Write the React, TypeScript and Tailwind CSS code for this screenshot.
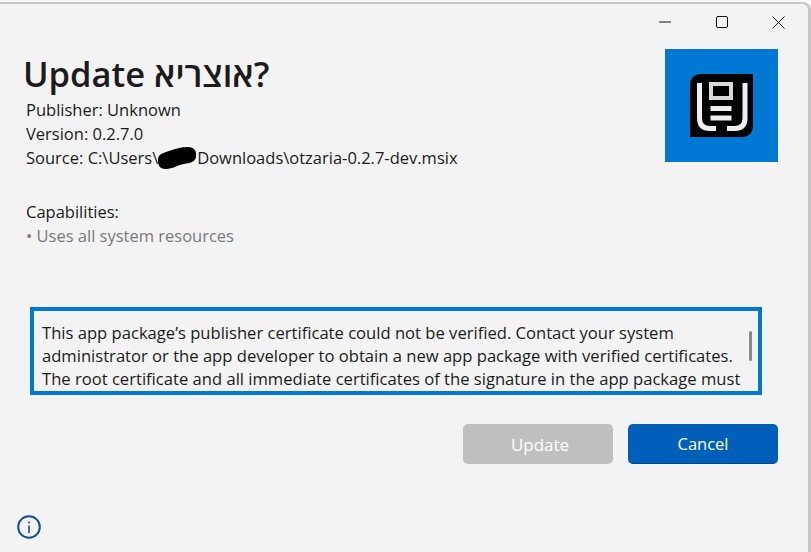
const font = { fontFamily: '"Open Sans", sans-serif' };

function CaptionButton({ children }: { children: React.ReactNode }) {
  return <div className="w-[57px] h-[36px] flex items-center justify-center">{children}</div>;
}

export default function App() {
  return (
    <div className="w-[811px] h-[552px] overflow-hidden bg-[#fafafa] text-[#1b1b1b]" style={font}>
      <div className="w-[811px] h-[550px] mt-[2px] bg-[#f3f3f3] border-t-2 border-r-[3px] border-[#c6c6c6] rounded-tr-lg flex flex-col relative">
        <div className="flex justify-end h-[40px] pr-[1px]">
          <CaptionButton>
            <svg width="12" height="2" viewBox="0 0 12 2"><path d="M0 1h12" stroke="#111" strokeWidth="1" /></svg>
          </CaptionButton>
          <CaptionButton>
            <svg width="12" height="12" viewBox="0 0 12 12"><rect x=".5" y=".5" width="11" height="11" rx="1.5" fill="none" stroke="#111" /></svg>
          </CaptionButton>
          <CaptionButton>
            <svg width="13" height="13" viewBox="0 0 13 13"><path d="M.5.5l12 12M12.5.5l-12 12" stroke="#111" fill="none" /></svg>
          </CaptionButton>
        </div>
        <div className="flex justify-between pl-[23px] pr-[30px]">
          <div className="pt-[7px]">
            <h1 className="text-[34.5px] leading-[46px] font-semibold">Update אוצריא?</h1>
            <div className="text-[16.5px] leading-[24px] mt-[1px] pl-[3px]">
              <p>Publisher: Unknown</p>
              <p>Version: 0.2.7.0</p>
              <p className="flex items-center">
                Source: C:\Users\
                <svg width="40" height="24" viewBox="0 0 40 24" className="shrink-0 -ml-[1px]">
                  <path d="M1 14C1 8 6 7 12 5C18 3 24 1 31 1C37 1 40 5 39 11C38 16 33 17 27 18C20 19 16 23 9 23C3 23 1 20 1 14Z" fill="#000" />
                </svg>
                Downloads\otzaria-0.2.7-dev.msix
              </p>
              <p className="mt-[30px]">Capabilities:</p>
              <p className="text-[#7a7a7a]">• Uses all system resources</p>
            </div>
          </div>
          <div className="w-[113px] h-[113px] mt-[5px] bg-[#0078d4] flex items-center justify-center">
            <svg width="63" height="63" viewBox="0 0 63 63">
              <path d="M0 63V12Q0 0 12 0H63V51Q63 63 51 63Z" fill="#000" />
              <g fill="none" stroke="#eee" strokeWidth="5">
                <path d="M9.5 9V44Q9.5 54.5 20 54.5H26" />
                <path d="M55 9V44Q55 54.5 44.5 54.5H37" />
              </g>
              <rect x="21" y="10" width="20" height="14" fill="none" stroke="#d9d9d9" strokeWidth="4" />
              <rect x="20.5" y="32" width="21" height="5" fill="#eee" />
              <rect x="20.5" y="41.5" width="21" height="5" fill="#eee" />
            </svg>
          </div>
        </div>
        <div className="ml-[30px] mr-[46px] mt-[59px] h-[88px] border-[4px] border-[#0078d4] overflow-hidden relative pl-[8px] pt-[10px] text-[16.6px] leading-[23px] whitespace-nowrap">
          <p>This app package’s publisher certificate could not be verified. Contact your system</p>
          <p>administrator or the app developer to obtain a new app package with verified certificates.</p>
          <p>The root certificate and all immediate certificates of the signature in the app package must</p>
          <div className="absolute right-[6px] top-[20px] w-[3px] h-[30px] bg-[#8a8a8a] rounded-full" />
        </div>
        <div className="flex justify-end gap-[15px] mt-[29px] pr-[30px]">
          <div className="w-[150px] h-[40px] pl-[4px] pt-[1px] rounded-[5px] bg-[#bfbfbf] text-white text-[17px] flex items-center justify-center">Update</div>
          <div className="w-[150px] h-[40px] pt-[1px] rounded-[5px] bg-[#005fb8] border-b border-[#00488c] text-white text-[16.5px] flex items-center justify-center">Cancel</div>
        </div>
        <div className="flex-1 flex items-end pl-[17px] pb-[13px]">
          <svg width="24" height="24" viewBox="0 0 24 24">
            <circle cx="12" cy="12" r="10.8" fill="none" stroke="#0f4fa0" strokeWidth="2" />
            <path d="M12 10.5V18" stroke="#0f4fa0" strokeWidth="1.6" />
            <circle cx="12" cy="7.5" r="1" fill="#0f4fa0" />
          </svg>
        </div>
      </div>
    </div>
  );
}
